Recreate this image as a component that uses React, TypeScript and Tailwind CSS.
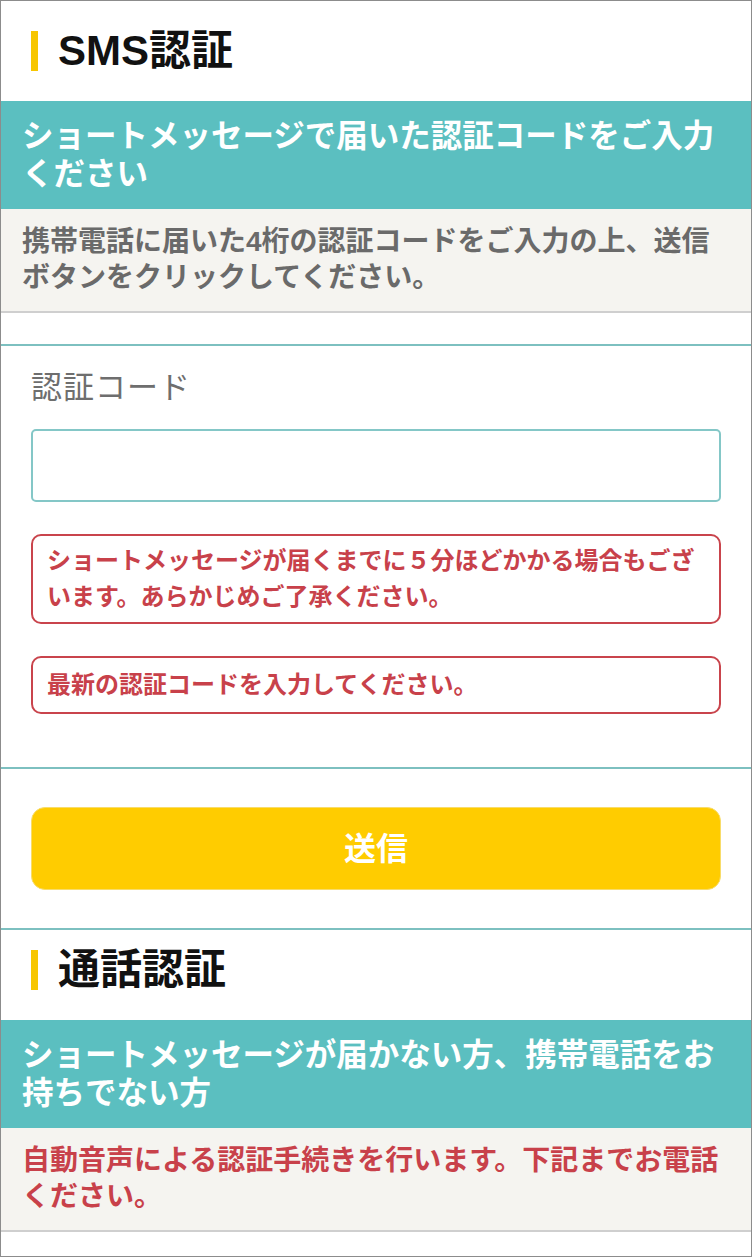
const font = { fontFamily: '"Liberation Sans", "Noto Sans CJK JP", sans-serif' };

function Heading({ title }: { title: string }) {
  return (
    <div className="flex items-center pl-[30px]">
      <span className="w-[7px] h-[40px] bg-[#f7c600]" />
      <h2 className="ml-[20px] text-[42px] leading-[40px] font-bold text-[#111]">{title}</h2>
    </div>
  );
}

function Band({ children }: { children: React.ReactNode }) {
  return (
    <div className="bg-[#5bbfc0] pl-[21px] pr-[22px] h-[108px] flex items-center">
      <p className="text-white font-bold text-[31.5px] leading-[38px]">{children}</p>
    </div>
  );
}

function Lead({ children, red }: { children: React.ReactNode; red?: boolean }) {
  return (
    <div className="bg-[#f5f4f0] border-b-2 border-[#cfcfcf] pl-[21px] pr-[22px] h-[104px] flex items-center">
      <p className={`font-bold leading-[36px] text-[28px] ${red ? "text-[#c8414a]" : "text-[#6a6a6a]"}`}>
        {children}
      </p>
    </div>
  );
}

function Notice({ children, py }: { children: React.ReactNode; py: string }) {
  return (
    <div className={`border-2 border-[#c9444c] rounded-[10px] px-[14px] ${py}`}>
      <p className="text-[24px] leading-[36px] font-bold text-[#c8414a]">{children}</p>
    </div>
  );
}

export default function App() {
  return (
    <div style={font} className="w-[752px] h-[1257px] border border-[#8c8c8c] bg-white overflow-hidden flex flex-col">
      {/* SMS認証 */}
      <div className="h-[100px] flex items-center">
        <Heading title="SMS認証" />
      </div>
      <Band>ショートメッセージで届いた認証コードをご入力ください</Band>
      <Lead>携帯電話に届いた4桁の認証コードをご入力の上、送信ボタンをクリックしてください。</Lead>

      {/* form */}
      <div className="mt-[31px] border-t-2 border-b-2 border-[#7dc0c0] px-[30px] pt-[22px] pb-[53px]">
        <label className="block text-[31px] leading-[40px] text-[#6e6e6e] tracking-[1px]">認証コード</label>
        <input
          type="text"
          className="mt-[21px] w-full h-[73px] border-2 border-[#84c7c7] rounded-[5px] px-3 text-[28px] outline-none"
        />
        <div className="mt-[32px] flex flex-col gap-[32px]">
          <Notice py="py-[7px]">ショートメッセージが届くまでに５分ほどかかる場合もございます。あらかじめご了承ください。</Notice>
          <Notice py="py-[9px]">最新の認証コードを入力してください。</Notice>
        </div>
      </div>

      <div className="px-[30px] pt-[38px] pb-[38px] border-b-2 border-[#7dc0c0]">
        <button className="w-full h-[83px] bg-[#ffcc00] border border-[#f8dc6a] rounded-[14px] text-white text-[32px] font-bold">
          送信
        </button>
      </div>

      {/* 通話認証 */}
      <div className="pt-[20px] pb-[30px]">
        <Heading title="通話認証" />
      </div>
      <Band>ショートメッセージが届かない方、携帯電話をお持ちでない方</Band>
      <Lead red>自動音声による認証手続きを行います。下記までお電話ください。</Lead>
    </div>
  );
}
